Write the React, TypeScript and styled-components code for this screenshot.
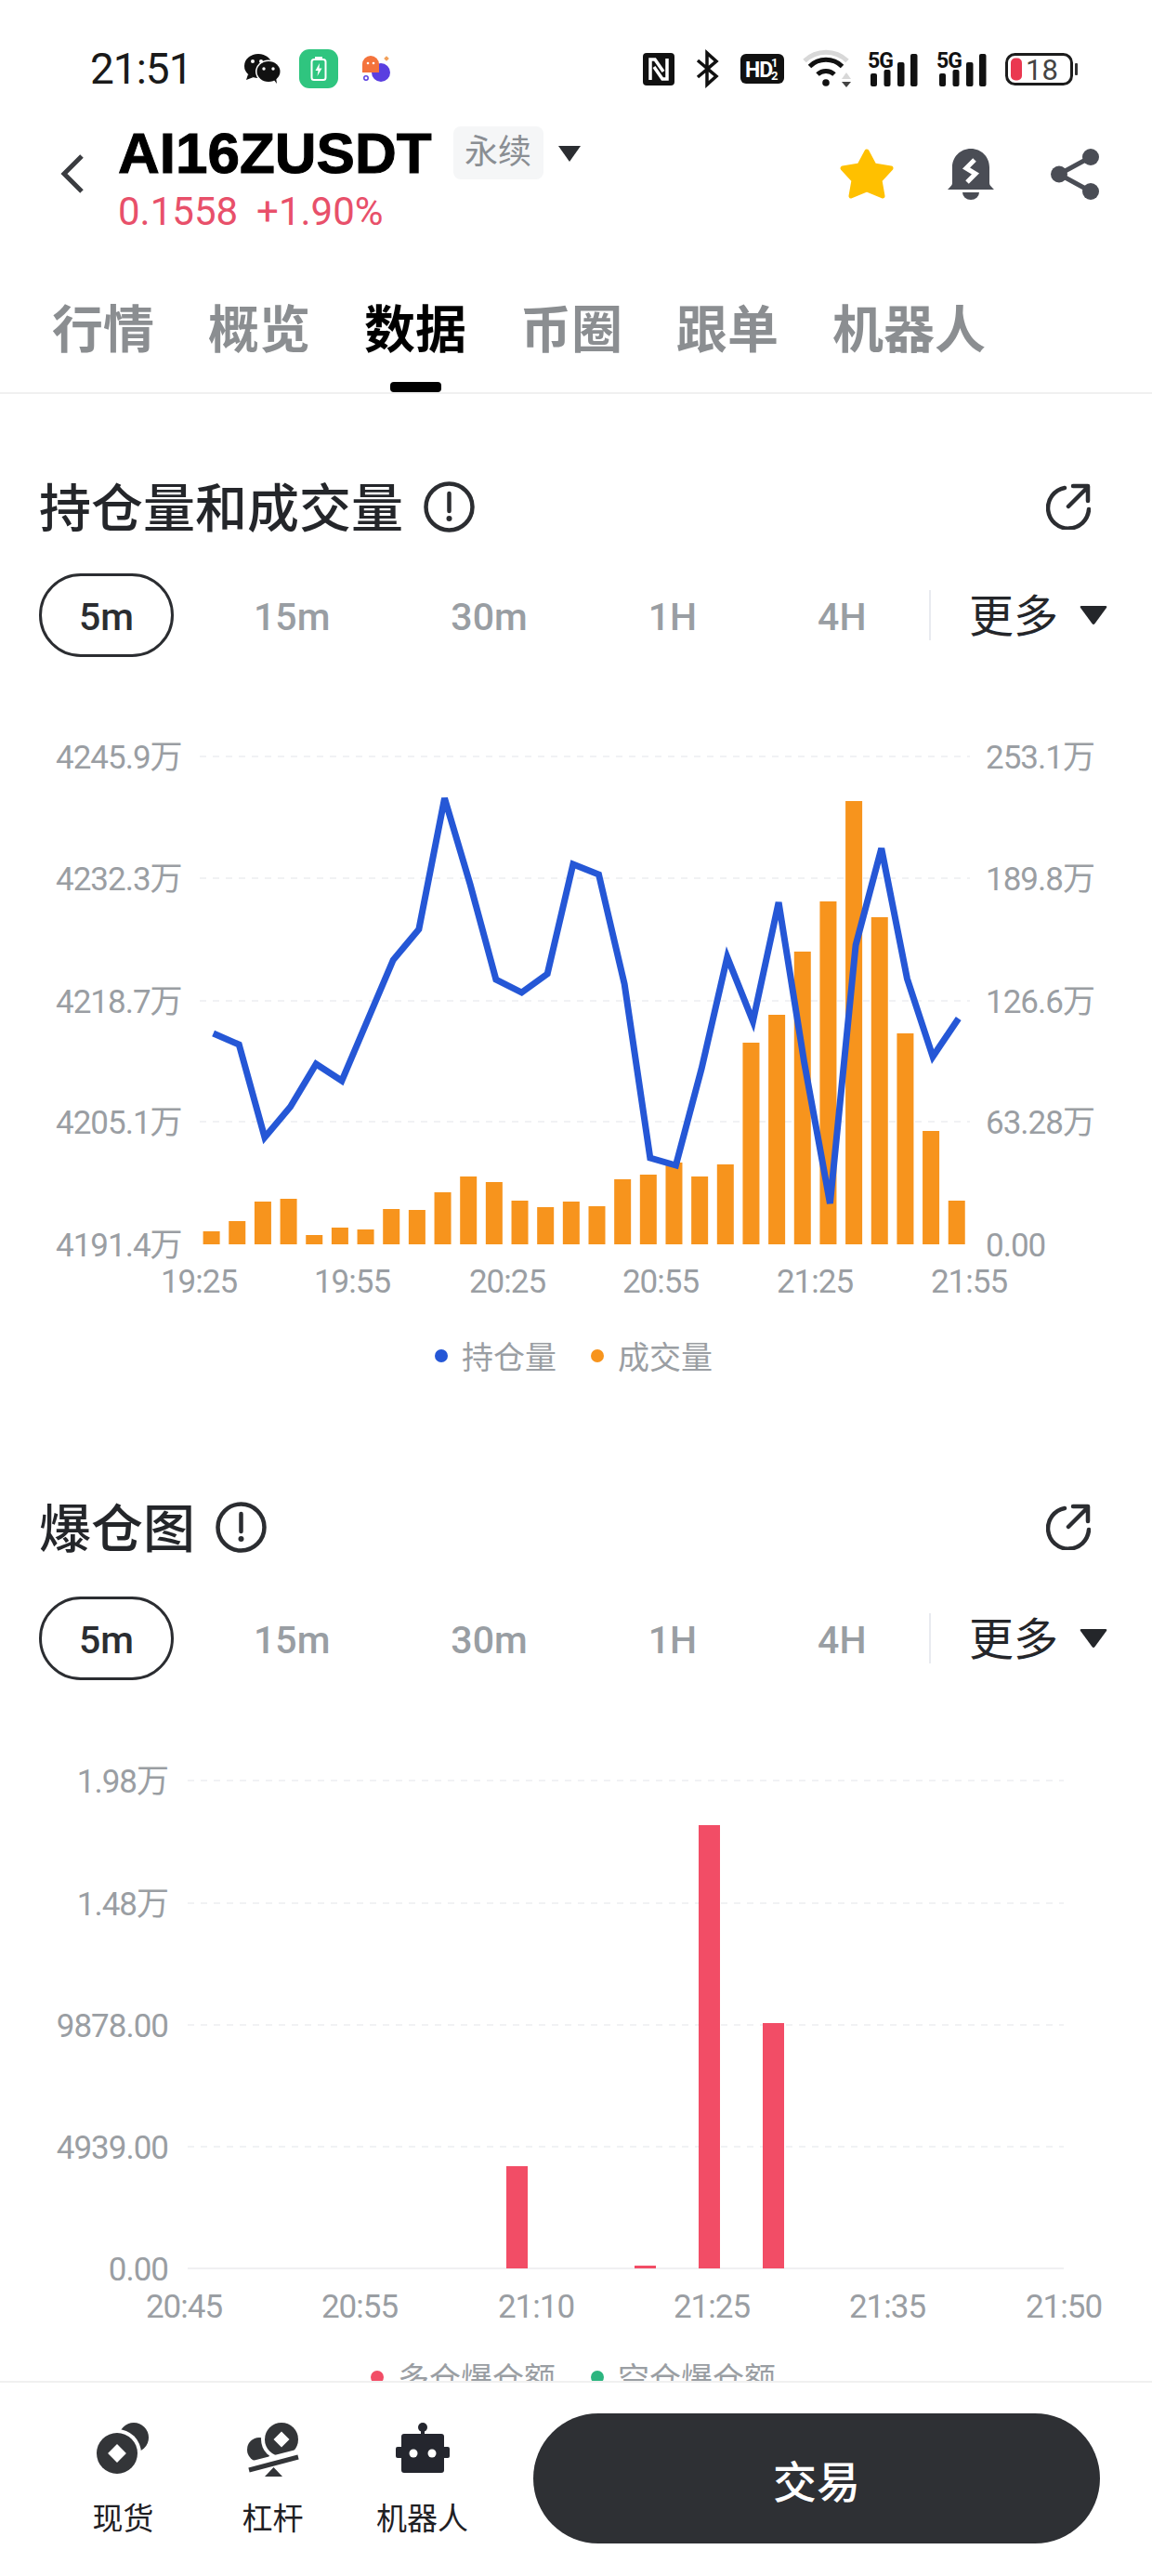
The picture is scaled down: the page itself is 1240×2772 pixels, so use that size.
import React from 'react'
import styled, { createGlobalStyle } from 'styled-components'

const GlobalStyle = createGlobalStyle`
  html, body {
    margin: 0;
    padding: 0;
    background: #ffffff;
  }
  body {
    font-family: Roboto, "Noto Sans CJK SC", sans-serif;
  }
`

const Page = styled.div`
  position: relative;
  width: 1240px;
  height: 2772px;
  overflow: hidden;
  background: #ffffff;
  display: flex;
  flex-direction: column;
`

const StatusBar = styled.div`
  height: 108px;
  padding: 20px 80px 0 97px;
  display: flex;
  align-items: center;
  justify-content: space-between;
  flex-shrink: 0;
`

const StatusGroup = styled.div`
  display: flex;
  align-items: center;
`

const Time = styled.div`
  font-size: 46px;
  line-height: 60px;
  color: #1a1a1a;
  width: 166px;
  letter-spacing: -1px;
`

const StatusIcon = styled.svg<{ $gap?: number }>`
  display: block;
  flex-shrink: 0;
  overflow: visible;
  margin-right: ${props => props.$gap || 0}px;
`

const BatteryIcon = styled(StatusIcon)`
  margin-left: 20px;
`

const Header = styled.div`
  height: 118px;
  padding: 0 57px 0 63px;
  display: flex;
  align-items: center;
  flex-shrink: 0;
`

const Back = styled.svg`
  width: 28px;
  height: 44px;
  margin-right: 36px;
  flex-shrink: 0;
`

const Symbol = styled.div`
  display: flex;
  flex-direction: column;
  flex: 1;
  padding-top: 12px;
`

const SymbolRow = styled.div`
  display: flex;
  align-items: flex-start;
  height: 58px;
`

const SymbolName = styled.div`
  font-family: "Liberation Sans", sans-serif;
  font-weight: 700;
  font-size: 62px;
  line-height: 58px;
  color: #000000;
  -webkit-text-stroke: 1px #000000;
  margin-right: 23px;
`

const Tag = styled.div`
  width: 97px;
  height: 57px;
  background: #f5f6f7;
  border-radius: 8px;
  font-size: 36px;
  line-height: 57px;
  text-align: center;
  color: #8a8e93;
  margin-right: 15px;
`

const TitleCaret = styled.svg`
  width: 26px;
  height: 17px;
  margin-top: 21px;
`

const PriceRow = styled.div`
  display: flex;
  margin-top: 12px;
  font-size: 42px;
  line-height: 44px;
  color: #e8506a;
`

const Price = styled.span`
  margin-right: 20px;
`

const HeaderActions = styled.div`
  display: flex;
  align-items: center;
`

const ActionIcon = styled.svg<{ $gap?: number }>`
  display: block;
  margin-right: ${props => props.$gap || 0}px;
`

const TabBar = styled.div`
  display: flex;
  gap: 58px;
  padding: 77px 0 0 56px;
  border-bottom: 2px solid #f0f0f0;
  flex-shrink: 0;
`

const Tab = styled.div`
  display: flex;
  flex-direction: column;
  align-items: center;
`

const TabLabel = styled.div<{ $active?: boolean }>`
  font-size: 55px;
  line-height: 64px;
  font-weight: 700;
  color: ${props => (props.$active ? '#000000' : '#8b8e91')};
`

const TabMark = styled.div<{ $active?: boolean }>`
  width: 55px;
  height: 11px;
  margin-top: 24px;
  border-radius: 4px;
  background: ${props => (props.$active ? '#000000' : 'transparent')};
`

const SectionHead = styled.div<{ $top: number }>`
  height: 60px;
  margin-top: ${props => props.$top}px;
  padding: 0 66px 0 42px;
  display: flex;
  align-items: center;
  flex-shrink: 0;
`

const SectionTitle = styled.div`
  font-size: 56px;
  line-height: 60px;
  font-weight: 500;
  color: #24262a;
  margin-right: 22px;
  padding-top: 5px;
`

const Expand = styled.svg`
  width: 48px;
  height: 50px;
  margin-left: auto;
`

const RangeRow = styled.div<{ $top: number }>`
  margin-top: ${props => props.$top}px;
  height: 90px;
  padding: 0 48px 0 42px;
  display: flex;
  align-items: center;
  flex-shrink: 0;
`

const RangeItem = styled.div<{ $active?: boolean }>`
  box-sizing: border-box;
  height: 90px;
  display: flex;
  align-items: center;
  font-size: 41px;
  font-weight: 500;
  padding: 4px ${props => (props.$active ? '40px' : '65px')} 0;
  margin-right: ${props => (props.$active ? '21px' : '0')};
  border: ${props => (props.$active ? '3px solid #2b2d31' : '0')};
  border-radius: 45px;
  color: ${props => (props.$active ? '#2b2d31' : '#999ea3')};
`

const More = styled.div`
  margin-left: auto;
  display: flex;
  align-items: center;
`

const MoreRule = styled.div`
  width: 2px;
  height: 54px;
  background: #e8eaf0;
  margin-right: 41px;
`

const MoreLabel = styled.div`
  font-size: 48px;
  line-height: 60px;
  color: #24262a;
  margin-right: 23px;
  padding-top: 4px;
`

const MoreCaret = styled.svg`
  width: 30px;
  height: 22px;
`

const ChartSvg = styled.svg`
  display: block;
  flex-shrink: 0;
  text {
    font-family: Roboto, "Noto Sans CJK SC", sans-serif;
    font-size: 35px;
    letter-spacing: -1px;
    fill: #9a9ea3;
  }
  text.legend {
    font-size: 34px;
    letter-spacing: 0;
  }
`

const BottomBar = styled.div`
  position: absolute;
  left: 0;
  right: 0;
  bottom: 0;
  box-sizing: border-box;
  height: 210px;
  background: #ffffff;
  border-top: 2px solid #f0f0f0;
  padding: 33px 56px 0 52px;
  display: flex;
  align-items: flex-start;
`

const NavItem = styled.div`
  width: 161px;
  display: flex;
  flex-direction: column;
  align-items: center;
  padding-top: 10px;
`

const NavIcon = styled.svg`
  width: 58px;
  height: 58px;
  display: block;
`

const NavLabel = styled.div`
  font-size: 33px;
  line-height: 46px;
  margin-top: 23px;
  color: #1f2024;
`

const TradeButton = styled.div`
  width: 610px;
  height: 140px;
  margin-left: auto;
  border-radius: 70px;
  background: #2e3034;
  color: #ffffff;
  font-size: 47px;
  font-weight: 500;
  display: flex;
  align-items: center;
  justify-content: center;
`

const TABS = ['行情', '概览', '数据', '币圈', '跟单', '机器人']
const RANGES = ['5m', '15m', '30m', '1H', '4H']

// chart one: read off the reference, y in page pixels
const BAR_X0 = 227.6
const BAR_STEP = 27.66
const OI_BASE = 1339
const OI_BARS = [
  14, 25, 46, 49, 10, 18, 16, 38, 37, 56, 73, 67, 47, 40, 46, 41, 70, 75, 88, 73, 86, 217, 247, 315, 369, 477, 352, 227, 122, 47,
]
const OI_LINE = [
  1112, 1124, 1224, 1191, 1145, 1163, 1098, 1033, 1000, 859, 952, 1054, 1068, 1048, 930, 941, 1059, 1246, 1254, 1150, 1030, 1099, 971,
  1144, 1295, 1017, 913, 1053, 1137, 1096,
]
const OI_GRID = [814, 945, 1077, 1207, 1339]
const OI_LEFT = ['4245.9万', '4232.3万', '4218.7万', '4205.1万', '4191.4万']
const OI_RIGHT = ['253.1万', '189.8万', '126.6万', '63.28万', '0.00']
const OI_TIMES: [string, number][] = [
  ['19:25', 214],
  ['19:55', 379],
  ['20:25', 546],
  ['20:55', 711],
  ['21:25', 877],
  ['21:55', 1043],
]

const LIQ_BASE = 2440
const LIQ_GRID = [1915, 2047, 2178, 2309]
const LIQ_LEFT = ['1.98万', '1.48万', '9878.00', '4939.00', '0.00']
const LIQ_BARS: [number, number][] = [
  [545, 2330],
  [683, 2437],
  [752, 1963],
  [821, 2176],
]
const LIQ_TIMES: [string, number][] = [
  ['20:45', 198],
  ['20:55', 387],
  ['21:10', 577],
  ['21:25', 766],
  ['21:35', 955],
  ['21:50', 1145],
]

const Dashes = ({ ys, from, to }: { ys: number[]; from: number; to: number }) => (
  <>
    {ys.map(y => (
      <line key={y} x1={from} x2={to} y1={y} y2={y} stroke="#f1f2f4" strokeWidth="2" strokeDasharray="7 7" />
    ))}
  </>
)

const Legend = ({ y, items }: { y: number; items: [string, string, number][] }) => (
  <>
    {items.map(([label, color, x]) => (
      <g key={label}>
        <circle cx={x} cy={y - 2} r="7" fill={color} />
        <text className="legend" x={x + 22} y={y + 12}>
          {label}
        </text>
      </g>
    ))}
  </>
)

const OpenInterestChart = () => (
  <ChartSvg width="1240" height="793" viewBox="0 707 1240 793">
    <Dashes ys={OI_GRID.slice(0, 4)} from={215} to={1044} />
    {OI_LEFT.map((label, i) => (
      <text key={label} x="60" y={OI_GRID[i] + 13}>
        {label}
      </text>
    ))}
    {OI_RIGHT.map((label, i) => (
      <text key={label} x="1061" y={OI_GRID[i] + 13}>
        {label}
      </text>
    ))}
    {OI_BARS.map((h, i) => (
      <rect key={i} x={BAR_X0 + BAR_STEP * i - 9} y={OI_BASE - h} width="18" height={h} fill="#f7941d" />
    ))}
    <polyline
      points={OI_LINE.map((y, i) => `${BAR_X0 + 2 + BAR_STEP * i},${y}`).join(' ')}
      fill="none"
      stroke="#2557d6"
      strokeWidth="7"
    />
    {OI_TIMES.map(([label, x]) => (
      <text key={label} x={x} y="1391" textAnchor="middle">
        {label}
      </text>
    ))}
    <Legend
      y={1461}
      items={[
        ['持仓量', '#2557d6', 475],
        ['成交量', '#f7941d', 643],
      ]}
    />
  </ChartSvg>
)

const LiquidationChart = () => (
  <ChartSvg width="1240" height="793" viewBox="0 1807 1240 793">
    <Dashes ys={LIQ_GRID} from={202} to={1145} />
    <line x1="202" x2="1145" y1={LIQ_BASE} y2={LIQ_BASE} stroke="#f0f0f2" strokeWidth="2" />
    {LIQ_LEFT.map((label, i) => (
      <text key={label} x="181" y={(LIQ_GRID[i] || LIQ_BASE) + 13} textAnchor="end">
        {label}
      </text>
    ))}
    {LIQ_BARS.map(([x, top]) => (
      <rect key={x} x={x} y={top} width="23" height={LIQ_BASE - top} fill="#f24d66" />
    ))}
    {LIQ_TIMES.map(([label, x]) => (
      <text key={label} x={x} y="2493" textAnchor="middle">
        {label}
      </text>
    ))}
    <Legend
      y={2559}
      items={[
        ['多仓爆仓额', '#f24d66', 406],
        ['空仓爆仓额', '#2cb57f', 643],
      ]}
    />
  </ChartSvg>
)

const InfoIcon = () => (
  <svg width="55" height="55" viewBox="0 0 55 55">
    <circle cx="27.5" cy="27.5" r="25" fill="none" stroke="#2b2d31" strokeWidth="4.5" />
    <path d="M27.5 13v19" stroke="#2b2d31" strokeWidth="4.5" strokeLinecap="round" />
    <circle cx="27.5" cy="40" r="3" fill="#2b2d31" />
  </svg>
)

const ExpandIcon = () => (
  <Expand viewBox="0 0 48 50" fill="none" stroke="#2b2d31" strokeWidth="4.5" strokeLinecap="round" strokeLinejoin="round">
    <path d="M20 5A22 22 0 1 0 46 28" />
    <path d="M24 25L45 4M29 3H45V19" />
  </Expand>
)

const Ranges = ({ top }: { top: number }) => (
  <RangeRow $top={top}>
    {RANGES.map((range, i) => (
      <RangeItem key={range} $active={i === 0}>
        {range}
      </RangeItem>
    ))}
    <More>
      <MoreRule />
      <MoreLabel>更多</MoreLabel>
      <MoreCaret viewBox="0 0 30 22">
        <path d="M2 1H28Q30 1 29 3L16.500 20Q15 22 13.500 20L1 3Q0 1 2 1Z" fill="#24262a" />
      </MoreCaret>
    </More>
  </RangeRow>
)

const StatusIcons = () => (
  <StatusGroup>
    <StatusIcon width="39" height="32" viewBox="0 0 39 32" $gap={20}>
      <path d="M4 22L2 28L10 25Z" fill="#111" />
      <ellipse cx="15" cy="13" rx="15" ry="13" fill="#111" />
      <ellipse cx="26" cy="19" rx="14" ry="12.500" fill="#fff" />
      <ellipse cx="26" cy="19" rx="12.500" ry="11" fill="#111" />
      <path d="M31 27L35 32L34 25Z" fill="#111" />
      <circle cx="9" cy="8" r="2" fill="#fff" />
      <circle cx="18" cy="8" r="2" fill="#fff" />
      <circle cx="21" cy="16" r="1.700" fill="#fff" />
      <circle cx="31" cy="16" r="1.700" fill="#fff" />
    </StatusIcon>
    <StatusIcon width="42" height="42" viewBox="0 0 42 42" $gap={26}>
      <rect width="42" height="42" rx="11" fill="#2fc57f" />
      <rect x="13.500" y="11" width="15" height="22" rx="2.500" fill="none" stroke="#fff" strokeWidth="2" />
      <rect x="17" y="8" width="8" height="3" fill="#fff" />
      <path d="M22 15L17.500 23H20.500L19.500 29L24.500 20.500H21.500Z" fill="#fff" />
    </StatusIcon>
    <StatusIcon width="30" height="28" viewBox="0 0 30 28">
      <circle cx="20" cy="18" r="10" fill="#5a3fe0" />
      <path d="M0 9A9 9 0 0 1 18 9V18H0Z" fill="#f4733c" />
      <circle cx="6" cy="8" r="1.300" fill="#fff" />
      <circle cx="12" cy="8" r="1.300" fill="#fff" />
      <circle cx="4" cy="24" r="2.200" fill="none" stroke="#5a3fe0" strokeWidth="1.500" />
      <rect x="24" y="1" width="4" height="4" fill="#f2a05a" transform="rotate(45 26 3)" />
    </StatusIcon>
  </StatusGroup>
)

const SystemIcons = () => (
  <StatusGroup>
    <StatusIcon width="34" height="35" viewBox="0 0 34 35" $gap={23}>
      <rect width="34" height="35" rx="4" fill="#111" />
      <path d="M8 29V7H13L22 20M26 6V28H21L12 15" fill="none" stroke="#fff" strokeWidth="3.500" />
    </StatusIcon>
    <StatusIcon width="24" height="38" viewBox="0 0 24 38" $gap={24}>
      <polyline points="2,10 22,27 12,36 12,2 22,11 2,28" fill="none" stroke="#111" strokeWidth="3.500" />
    </StatusIcon>
    <StatusIcon width="47" height="32" viewBox="0 0 47 32" $gap={22}>
      <rect width="47" height="32" rx="6" fill="#111" />
      <text x="5" y="25" fontFamily="Roboto" fontWeight="700" fontSize="23" fill="#fff" letterSpacing="-1">
        HD
      </text>
      <text x="33" y="14" fontFamily="Roboto" fontWeight="700" fontSize="13" fill="#fff">
        1
      </text>
      <text x="33" y="28" fontFamily="Roboto" fontWeight="700" fontSize="13" fill="#fff">
        2
      </text>
    </StatusIcon>
    <StatusIcon width="50" height="40" viewBox="0 0 50 40" $gap={18}>
      <g fill="none" strokeWidth="5">
        <path d="M0 11.500A33 33 0 0 1 46 11.500" stroke="#d8d8d8" />
        <path d="M5.500 17.500A25 25 0 0 1 40.500 17.500" stroke="#111" />
        <path d="M14 26A13 13 0 0 1 32 26" stroke="#111" />
      </g>
      <circle cx="23" cy="35" r="3.800" fill="#111" />
      <path d="M40 31L45 24L50 31Z" fill="#d8d8d8" />
      <path d="M40 34L45 40L50 34Z" fill="#444" />
    </StatusIcon>
    {[20, 0].map(gap => (
      <StatusIcon key={gap} width="54" height="38" viewBox="0 0 54 38" $gap={gap}>
        <text x="0" y="18" fontFamily="Roboto" fontWeight="700" fontSize="23" fill="#111" letterSpacing="-1">
          5G
        </text>
        <rect x="3" y="24" width="7" height="14" rx="2" fill="#111" />
        <rect x="17.500" y="20" width="7" height="18" rx="2" fill="#111" />
        <rect x="32" y="12" width="7.500" height="26" rx="2" fill="#111" />
        <rect x="46" y="3" width="7.500" height="35" rx="2" fill="#111" />
      </StatusIcon>
    ))}
    <BatteryIcon width="78" height="35" viewBox="0 0 78 35">
      <rect x="1.500" y="1.500" width="70" height="32" rx="9" fill="none" stroke="#1c1c1c" strokeWidth="3" />
      <rect x="6" y="5.500" width="12" height="24" rx="5" fill="#ea3850" />
      <text x="22" y="29" fontFamily="Roboto" fontSize="31" fill="#444">
        18
      </text>
      <rect x="75" y="11" width="3" height="13" rx="1" fill="#333" />
    </BatteryIcon>
  </StatusGroup>
)

export default function App() {
  return (
    <Page>
      <GlobalStyle />
      <StatusBar>
        <StatusGroup>
          <Time>21:51</Time>
          <StatusIcons />
        </StatusGroup>
        <SystemIcons />
      </StatusBar>

      <Header>
        <Back viewBox="0 0 28 44">
          <polyline points="25,3 6,22 25,41" fill="none" stroke="#3a3c40" strokeWidth="5" />
        </Back>
        <Symbol>
          <SymbolRow>
            <SymbolName>AI16ZUSDT</SymbolName>
            <Tag>永续</Tag>
            <TitleCaret viewBox="0 0 26 17">
              <path d="M1 0H25L13 17Z" fill="#2b2d31" />
            </TitleCaret>
          </SymbolRow>
          <PriceRow>
            <Price>0.1558</Price>
            <span>+1.90%</span>
          </PriceRow>
        </Symbol>
        <HeaderActions>
          <ActionIcon width="60" height="56" viewBox="0 0 60 56" $gap={57}>
            <polygon
              points="30,4 38,19 56,22 44,35 47,52 30,45 13,52 16,35 4,22 22,19"
              fill="#ffc000"
              stroke="#ffc000"
              strokeWidth="5"
              strokeLinejoin="round"
            />
          </ActionIcon>
          <ActionIcon width="50" height="55" viewBox="0 0 50 55" $gap={61}>
            <path
              d="M25 0C13.500 0 5 9 5 20V37C5 39 3.500 40.500 1.500 42.500L0 44H50L48.500 42.500C46.500 40.500 45 39 45 37V20C45 9 36.500 0 25 0Z"
              fill="#4a4d55"
            />
            <path d="M16 47H34A9 8 0 0 1 16 47Z" fill="#4a4d55" />
            <polyline points="29,12 20,21 30,27 21,36" fill="none" stroke="#fff" strokeWidth="5" />
          </ActionIcon>
          <ActionIcon width="52" height="55" viewBox="0 0 52 55">
            <path d="M43 9L9 27.500L43 46" fill="none" stroke="#4a4d55" strokeWidth="5" />
            <circle cx="43" cy="9" r="9" fill="#4a4d55" />
            <circle cx="9" cy="27.500" r="9" fill="#4a4d55" />
            <circle cx="43" cy="46" r="9" fill="#4a4d55" />
          </ActionIcon>
        </HeaderActions>
      </Header>

      <TabBar>
        {TABS.map(tab => (
          <Tab key={tab}>
            <TabLabel $active={tab === '数据'}>{tab}</TabLabel>
            <TabMark $active={tab === '数据'} />
          </Tab>
        ))}
      </TabBar>

      <SectionHead $top={91}>
        <SectionTitle>持仓量和成交量</SectionTitle>
        <InfoIcon />
        <ExpandIcon />
      </SectionHead>
      <Ranges top={42} />
      <OpenInterestChart />

      <SectionHead $top={113}>
        <SectionTitle>爆仓图</SectionTitle>
        <InfoIcon />
        <ExpandIcon />
      </SectionHead>
      <Ranges top={45} />
      <LiquidationChart />

      <BottomBar>
        <NavItem>
          <NavIcon viewBox="0 0 58 58">
            <circle cx="40" cy="16" r="16" fill="#333538" />
            <circle cx="22" cy="33" r="26" fill="#fff" />
            <circle cx="22" cy="33" r="22" fill="#333538" />
            <rect x="15" y="26" width="14" height="14" fill="#fff" transform="rotate(45 22 33)" />
          </NavIcon>
          <NavLabel>现货</NavLabel>
        </NavItem>
        <NavItem>
          <NavIcon viewBox="0 0 58 58">
            <circle cx="14" cy="29" r="13" fill="#333538" />
            <circle cx="38" cy="18" r="22" fill="#fff" />
            <circle cx="38" cy="18" r="18" fill="#333538" />
            <rect x="32" y="12" width="12" height="12" fill="#fff" transform="rotate(45 38 18)" />
            <path d="M0 48L58 33" stroke="#fff" strokeWidth="10" />
            <path d="M3 51L56 37" stroke="#333538" strokeWidth="5" />
            <path d="M20 58H39L29.500 48Z" fill="#333538" />
          </NavIcon>
          <NavLabel>杠杆</NavLabel>
        </NavItem>
        <NavItem>
          <NavIcon viewBox="0 0 58 58">
            <circle cx="29" cy="5" r="5" fill="#24262e" />
            <rect x="27" y="6" width="4" height="8" fill="#24262e" />
            <rect x="6" y="12" width="46" height="42" rx="3" fill="#24262e" />
            <rect x="0" y="26" width="58" height="12" rx="2" fill="#24262e" />
            <circle cx="19" cy="33" r="4.500" fill="#fff" />
            <circle cx="39" cy="33" r="4.500" fill="#fff" />
          </NavIcon>
          <NavLabel>机器人</NavLabel>
        </NavItem>
        <TradeButton>交易</TradeButton>
      </BottomBar>
    </Page>
  )
}
